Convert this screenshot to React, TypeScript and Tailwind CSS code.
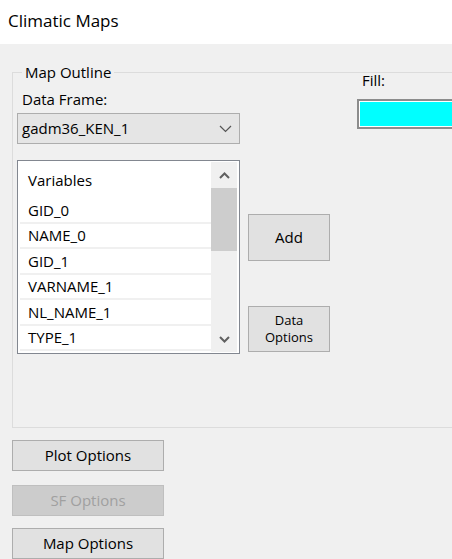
export default function App() {
  const vars = ["GID_0", "NAME_0", "GID_1", "VARNAME_1", "NL_NAME_1", "TYPE_1"];

  return (
    <div className="w-[452px] h-[559px] overflow-hidden bg-[#f0f0f0] text-black font-['Open_Sans',sans-serif]">
      <div className="h-[44px] bg-white pl-[8px] pt-[9px] text-[17px] leading-[24px]">Climatic Maps</div>

      <fieldset className="ml-[12px] mt-[18px] w-[460px] h-[366px] border border-[#dcdcdc] pl-[4px] flex">
        <legend className="ml-[5px] px-[3px] text-[15px] leading-[20px]">Map Outline</legend>
        <div className="flex">
          {/* left column */}
          <div className="w-[223px] pt-[7px] flex flex-col">
            <div className="text-[15px] leading-[20px] pl-[5px]">Data Frame:</div>
            <div className="mt-[4px] h-[31px] bg-[#e5e5e5] border border-[#adadad] flex items-center justify-between pl-[4px] pr-[7px]">
              <span className="text-[15px]">gadm36_KEN_1</span>
              <svg width="13" height="8" viewBox="0 0 13 8">
                <path d="M1 1l5.5 5.5L12 1" fill="none" stroke="#555" strokeWidth="1.2" />
              </svg>
            </div>
            <div className="mt-[16px] h-[194px] bg-white border border-[#828790] flex pl-[2px] pr-[2px] pt-[1px]">
              <div className="flex-1 flex flex-col text-[15px]">
                <div className="h-[36px] pl-[8px] flex items-center">Variables</div>
                {vars.map((v) => (
                  <div key={v} className="h-[25.5px] shrink-0 pl-[8px] border-b-2 border-[#f0f0f0] flex items-center">
                    {v}
                  </div>
                ))}
              </div>
              <div className="w-[26px] bg-[#f0f0f0] flex flex-col mb-[1px]">
                <div className="h-[26px] flex items-center justify-center">
                  <svg width="11" height="7" viewBox="0 0 11 7">
                    <path d="M1 6l4.5-4.5L10 6" fill="none" stroke="#606060" strokeWidth="2" />
                  </svg>
                </div>
                <div className="h-[63px] bg-[#cdcdcd]" />
                <div className="flex-1" />
                <div className="h-[26px] flex items-center justify-center">
                  <svg width="11" height="7" viewBox="0 0 11 7">
                    <path d="M1 1l4.5 4.5L10 1" fill="none" stroke="#606060" strokeWidth="2" />
                  </svg>
                </div>
              </div>
            </div>
          </div>

          {/* middle column */}
          <div className="ml-[8px] flex flex-col">
            <button className="mt-[132px] w-[82px] h-[47px] bg-[#e1e1e1] border border-[#adadad] text-[15px]">
              Add
            </button>
            <button className="mt-[45px] w-[82px] h-[46px] bg-[#e1e1e1] border border-[#adadad] text-[13px] leading-[17px]">
              Data
              <br />
              Options
            </button>
          </div>

          {/* fill column */}
          <div className="ml-[27px] -mt-[12px] flex flex-col">
            <div className="pl-[5px] text-[15px] leading-[20px]">Fill:</div>
            <div className="mt-[9px] w-[120px] h-[30px] border-2 border-[#8c8c8c] bg-white p-[1px]">
              <div className="w-full h-full bg-[#00ffff]" />
            </div>
          </div>
        </div>
      </fieldset>

      <div className="ml-[12px] flex flex-col text-[15px]">
        <button className="mt-[12px] w-[152px] h-[31px] bg-[#e1e1e1] border border-[#adadad]">Plot Options</button>
        <button className="mt-[14px] w-[152px] h-[31px] bg-[#cccccc] border border-[#bfbfbf] text-[#a0a0a0]">SF Options</button>
        <button className="mt-[12px] w-[152px] h-[31px] bg-[#e1e1e1] border border-[#adadad]">Map Options</button>
      </div>
    </div>
  );
}
